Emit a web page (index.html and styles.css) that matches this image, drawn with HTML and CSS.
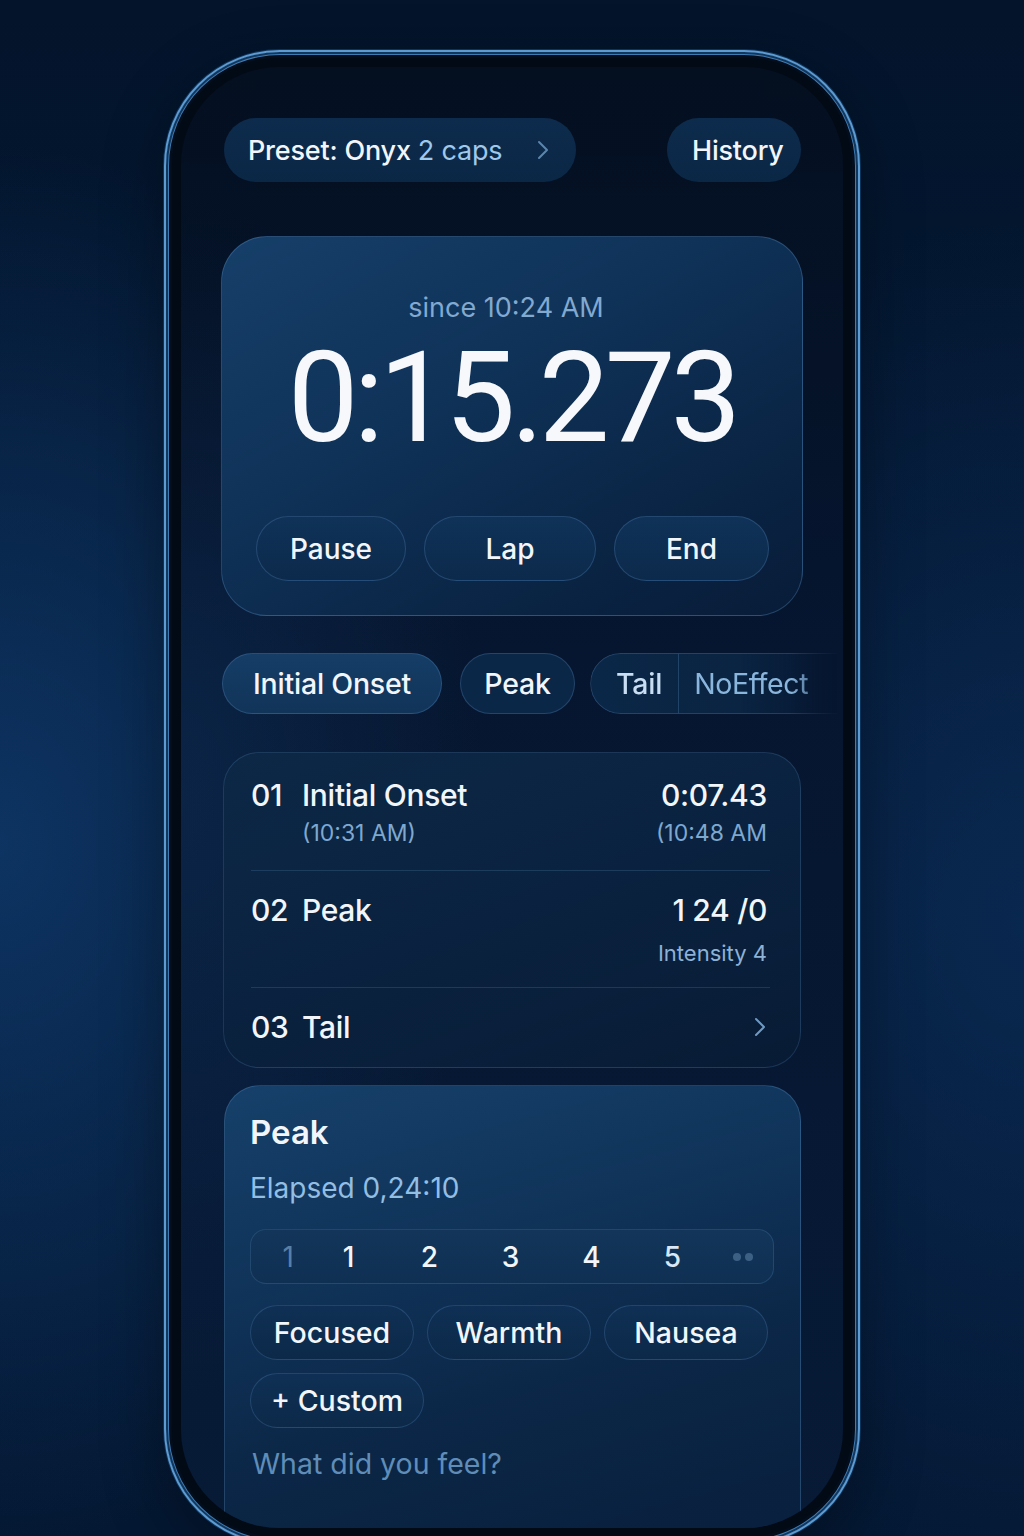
FILE: index.html
```html
<!DOCTYPE html>
<html lang="en">
<head>
<meta charset="utf-8">
<title>Timer</title>
<link rel="stylesheet" href="styles.css">
</head>
<body>
<div class="stage">
  <div class="phone">
    <div class="screen">
      <div class="topbar">
        <div class="pill preset"><span class="w">Preset: Onyx</span>&nbsp;<span class="b">2 caps</span>
          <svg class="chev" width="14" height="22" viewBox="0 0 14 22"><path d="M3 3 L11 11 L3 19" fill="none" stroke="currentColor" stroke-width="2" stroke-linecap="round" stroke-linejoin="round"/></svg>
        </div>
        <div class="pill history">History</div>
      </div>

      <div class="card timer">
        <div class="since">since 10:24 AM</div>
        <div class="clock">0:15.273</div>
        <div class="actions">
          <div class="btn">Pause</div>
          <div class="btn">Lap</div>
          <div class="btn">End</div>
        </div>
      </div>

      <div class="tabs">
        <div class="tab active">Initial Onset</div>
        <div class="tab peak">Peak</div>
        <div class="tab group"><span class="seg-a">Tail</span><span class="seg-b">NoEffect</span></div>
      </div>

      <div class="card list">
        <div class="row r1">
          <div class="left">
            <div class="main"><span class="num">01</span>Initial Onset</div>
            <div class="sub ind">(10:31 AM)</div>
          </div>
          <div class="right">
            <div class="main">0:07.43</div>
            <div class="sub">(10:48 AM</div>
          </div>
        </div>
        <div class="row r2">
          <div class="left">
            <div class="main"><span class="num">02</span>Peak</div>
          </div>
          <div class="right">
            <div class="main">1 24 /0</div>
            <div class="sub small">Intensity 4</div>
          </div>
        </div>
        <div class="row r3">
          <div class="left">
            <div class="main"><span class="num">03</span>Tail</div>
          </div>
          <svg class="chev2" width="16" height="24" viewBox="0 0 16 24"><path d="M4 4 L12 12 L4 20" fill="none" stroke="currentColor" stroke-width="2" stroke-linecap="round" stroke-linejoin="round"/></svg>
        </div>
      </div>

      <div class="card detail">
        <div class="title">Peak</div>
        <div class="elapsed">Elapsed 0,24:10</div>
        <div class="scale">
          <span class="s dim first">1</span>
          <span class="s">1</span>
          <span class="s">2</span>
          <span class="s">3</span>
          <span class="s">4</span>
          <span class="s light">5</span>
          <span class="s dots"><i></i><i></i></span>
        </div>
        <div class="chips">
          <div class="chip">Focused</div>
          <div class="chip">Warmth</div>
          <div class="chip">Nausea</div>
          <div class="chip custom">+ Custom</div>
        </div>
        <div class="prompt">What did you feel?</div>
      </div>
    </div>
  </div>
</div>
</body>
</html>
```

FILE: styles.css
```css
* { box-sizing: border-box; }
html, body { margin: 0; padding: 0; }
body {
  width: 1024px;
  height: 1536px;
  overflow: hidden;
  font-family: "Inter", "Roboto", "Liberation Sans", sans-serif;
  color: #f2f6fb;
  background:
    radial-gradient(ellipse 520px 700px at 0% 55%, rgba(16, 60, 112, 0.75), rgba(16, 60, 112, 0) 100%),
    radial-gradient(ellipse 500px 700px at 100% 60%, rgba(12, 48, 95, 0.6), rgba(12, 48, 95, 0) 100%),
    linear-gradient(180deg, #03142b 0%, #051b38 50%, #041833 100%);
}
.stage {
  display: flex;
  justify-content: center;
  padding-top: 50px;
}
.phone {
  width: 696px;
  height: 1495px;
  border-radius: 116px;
  padding: 15px;
  background: #020a16;
  border: 2px solid #5d9bd3;
  box-shadow:
    0 0 0 1px #0f3358,
    inset 0 0 0 2px #12365c,
    inset 0 0 0 3px #3e7cb4,
    inset 0 0 0 6px #030d1b,
    0 20px 60px rgba(0, 0, 0, 0.35);
}
.screen {
  height: 100%;
  border-radius: 98px;
  overflow: hidden;
  padding: 51px 40px 0 40px;
  background:
    radial-gradient(ellipse 300px 600px at 0% 50%, rgba(20, 62, 110, 0.35), rgba(20, 62, 110, 0) 100%),
    linear-gradient(180deg, #040f20 0%, #061630 40%, #071a36 100%);
}

/* top bar */
.topbar {
  display: flex;
  justify-content: space-between;
  align-items: center;
  padding: 0 2px 0 3px;
}
.pill {
  height: 64px;
  border-radius: 32px;
  display: flex;
  align-items: center;
  font-size: 27px;
  font-weight: 500;
  letter-spacing: -0.2px;
  background: linear-gradient(180deg, #0d2b4c 0%, #0b2746 100%);
}
.preset { padding: 0 26px 0 24px; width: 352px; }
.preset .b { color: #9ec8ec; font-weight: 400; }
.preset .chev { color: #5b86ae; margin-left: auto; }
.history { padding: 0 18px 0 25px; width: 134px; }

/* cards */
.card {
  border-radius: 46px;
  border: 1px solid rgba(96, 148, 200, 0.32);
}
.timer {
  margin-top: 54px;
  height: 380px;
  padding-top: 55px;
  background:
    linear-gradient(150deg, #163f69 0%, #0f3258 40%, #0a2444 75%, #081c38 100%);
  text-align: center;
}
.since {
  font-size: 27px;
  color: #82a9cf;
  line-height: 32px;
  padding-right: 12px;
}
.clock {
  font-family: "Roboto", "Inter", sans-serif;
  font-weight: 400;
  font-size: 126px;
  line-height: 120px;
  letter-spacing: -5px;
  margin-top: 14px;
  color: #f6f8fb;
}
.actions {
  margin-top: 58px;
  display: grid;
  grid-template-columns: 150px 172px 155px;
  justify-content: space-between;
  padding: 0 33px 0 34px;
}
.btn {
  height: 65px;
  border-radius: 33px;
  display: flex;
  align-items: center;
  justify-content: center;
  font-size: 28px;
  font-weight: 500;
  background: linear-gradient(180deg, #0f3258 0%, #0c2a4b 100%);
  border: 1px solid rgba(96, 148, 200, 0.28);
}

/* tabs */
.tabs {
  margin-top: 37px;
  display: flex;
  gap: 18px;
  padding-left: 1px;
}
.tab {
  flex-shrink: 0;
  height: 61px;
  border-radius: 31px;
  display: flex;
  align-items: center;
  justify-content: center;
  font-size: 28.5px;
  font-weight: 500;
  letter-spacing: -0.2px;
  border: 1px solid rgba(96, 148, 200, 0.28);
  background: #0b2747;
}
.tab.active { width: 220px; background: linear-gradient(180deg, #153d66 0%, #113459 100%); }
.tab.peak { width: 115px; }
.tab.group {
  width: 250px;
  margin-left: -3px;
  justify-content: flex-start;
  border-right: none;
  border-radius: 31px 0 0 31px;
  background: linear-gradient(90deg, #0b2747 0%, #0a2442 60%, rgba(10, 36, 66, 0) 100%);
  -webkit-mask-image: linear-gradient(90deg, #000 80%, rgba(0,0,0,0) 100%);
  mask-image: linear-gradient(90deg, #000 80%, rgba(0,0,0,0) 100%);
}
.seg-a {
  padding: 0 16px 0 25px;
  height: 100%;
  display: flex;
  align-items: center;
  border-right: 1px solid rgba(96, 148, 200, 0.28);
  color: #c9def2;
}
.seg-b {
  padding-left: 15px;
  color: #8ab6dd;
  font-weight: 400;
  letter-spacing: -0.4px;
}

/* list */
.list {
  margin: 38px 2px 0 2px;
  height: 316px;
  border-radius: 36px;
  padding: 0 20px 0 27px;
  background: linear-gradient(160deg, #0c2846 0%, #0a223f 50%, #081b35 100%);
  border-color: rgba(96, 148, 200, 0.22);
}
.row {
  display: flex;
  justify-content: space-between;
  align-items: flex-start;
  border-bottom: 1px solid rgba(96, 148, 200, 0.22);
  margin-right: 10px;
}
.row .right { padding-right: 3px; }
.row.r1 { height: 118px; padding-top: 24px; }
.row.r2 { height: 117px; padding-top: 21px; }
.row.r3 { height: 78px; border-bottom: none; align-items: center; }
.main {
  font-size: 30px;
  font-weight: 500;
  line-height: 36px;
  letter-spacing: -0.3px;
}
.num { display: inline-block; width: 51px; }
.sub {
  font-size: 23px;
  color: #7fa8cf;
  line-height: 30px;
  margin-top: 5px;
}
.sub.ind { padding-left: 51px; }
.right { text-align: right; }
.sub.small { font-size: 22px; margin-top: 10px; color: #8db2d6; }
.chev2 { color: #6f9ac3; margin-right: 2px; }

/* detail card */
.detail {
  margin: 17px 2px 0 3px;
  height: 520px;
  border-radius: 36px;
  padding: 24px 26px 0 25px;
  background: linear-gradient(165deg, #16406a 0%, #10345a 30%, #0b2646 60%, #081d3a 100%);
  border-color: rgba(96, 148, 200, 0.3);
}
.title {
  font-size: 33px;
  font-weight: 600;
  line-height: 44px;
}
.elapsed {
  margin-top: 17px;
  font-size: 28px;
  color: #93bee3;
  line-height: 34px;
}
.scale {
  margin-top: 24px;
  height: 55px;
  border-radius: 16px;
  background: linear-gradient(180deg, #123559 0%, #0f3053 100%);
  border: 1px solid rgba(96, 148, 200, 0.22);
  display: grid;
  grid-template-columns: 57px repeat(5, 81px) 1fr;
  align-items: center;
  font-size: 28px;
  font-weight: 500;
}
.s { text-align: center; }
.s.first { text-align: right; padding-right: 14px; color: #587fa5; font-weight: 400; }
.s.light { color: #d8e8f6; }
.dots { display: flex; justify-content: center; gap: 4px; }
.dots i { width: 8px; height: 8px; border-radius: 50%; background: #3c5f84; display: block; }
.chips {
  margin-top: 21px;
  display: flex;
  flex-wrap: wrap;
  gap: 13px 13px;
}
.chip {
  width: 164px;
  height: 55px;
  border-radius: 28px;
  display: flex;
  align-items: center;
  justify-content: center;
  font-size: 28.5px;
  font-weight: 500;
  background: linear-gradient(180deg, #0f3054 0%, #0c2949 100%);
  border: 1px solid rgba(96, 148, 200, 0.26);
}
.chip.custom { width: 174px; }
.prompt {
  margin-top: 18px;
  font-size: 28.5px;
  color: #5f8db8;
  line-height: 36px;
  padding-left: 2px;
}
```
